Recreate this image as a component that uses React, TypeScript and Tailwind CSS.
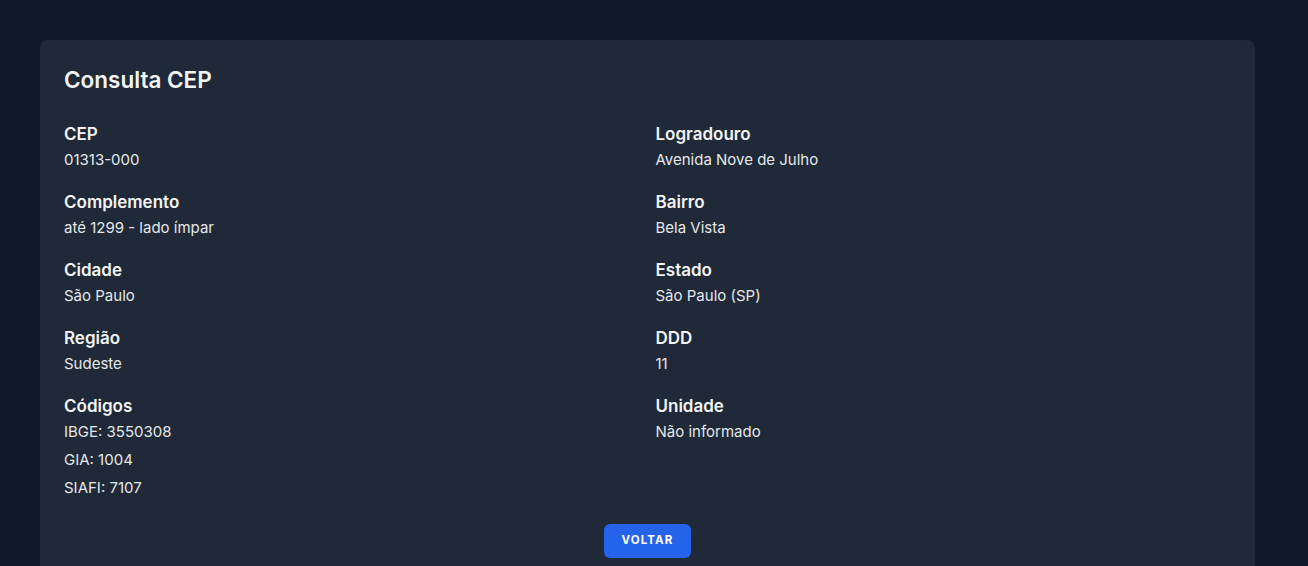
import React from "react";

interface Field {
  label: string;
  values: string[];
}

const left: Field[] = [
  { label: "CEP", values: ["01313-000"] },
  { label: "Complemento", values: ["até 1299 - lado ímpar"] },
  { label: "Cidade", values: ["São Paulo"] },
  { label: "Região", values: ["Sudeste"] },
  { label: "Códigos", values: ["IBGE: 3550308", "GIA: 1004", "SIAFI: 7107"] },
];

const right: Field[] = [
  { label: "Logradouro", values: ["Avenida Nove de Julho"] },
  { label: "Bairro", values: ["Bela Vista"] },
  { label: "Estado", values: ["São Paulo (SP)"] },
  { label: "DDD", values: ["11"] },
  { label: "Unidade", values: ["Não informado"] },
];

const FieldBlock: React.FC<{ field: Field }> = ({ field }) => (
  <div>
    <h3 className="text-[17px] font-semibold leading-6 text-gray-100">
      {field.label}
    </h3>
    <div className="mt-1 space-y-2">
      {field.values.map((v) => (
        <p key={v} className="text-[15px] leading-5 text-gray-200">
          {v}
        </p>
      ))}
    </div>
  </div>
);

export default function App() {
  return (
    <div
      className="min-h-[566px] bg-[#111827] px-10 pt-10"
      style={{ fontFamily: "Inter, 'Noto Sans', sans-serif" }}
    >
      <div className="w-[1215px] rounded-lg bg-[#1f2937] p-6">
        <h2 className="mb-[26px] text-[22.5px] font-semibold leading-8 text-gray-100">
          Consulta CEP
        </h2>
        <div className="grid grid-cols-2 gap-x-4">
          {[left, right].map((col, i) => (
            <div key={i} className="flex flex-col gap-5">
              {col.map((f) => (
                <FieldBlock key={f.label} field={f} />
              ))}
            </div>
          ))}
        </div>
        <div className="mt-[26px] flex justify-center">
          <button className="h-[34px] w-[87px] rounded-md bg-[#2563eb] text-[11.5px] font-bold uppercase tracking-widest text-white">
            Voltar
          </button>
        </div>
      </div>
    </div>
  );
}
